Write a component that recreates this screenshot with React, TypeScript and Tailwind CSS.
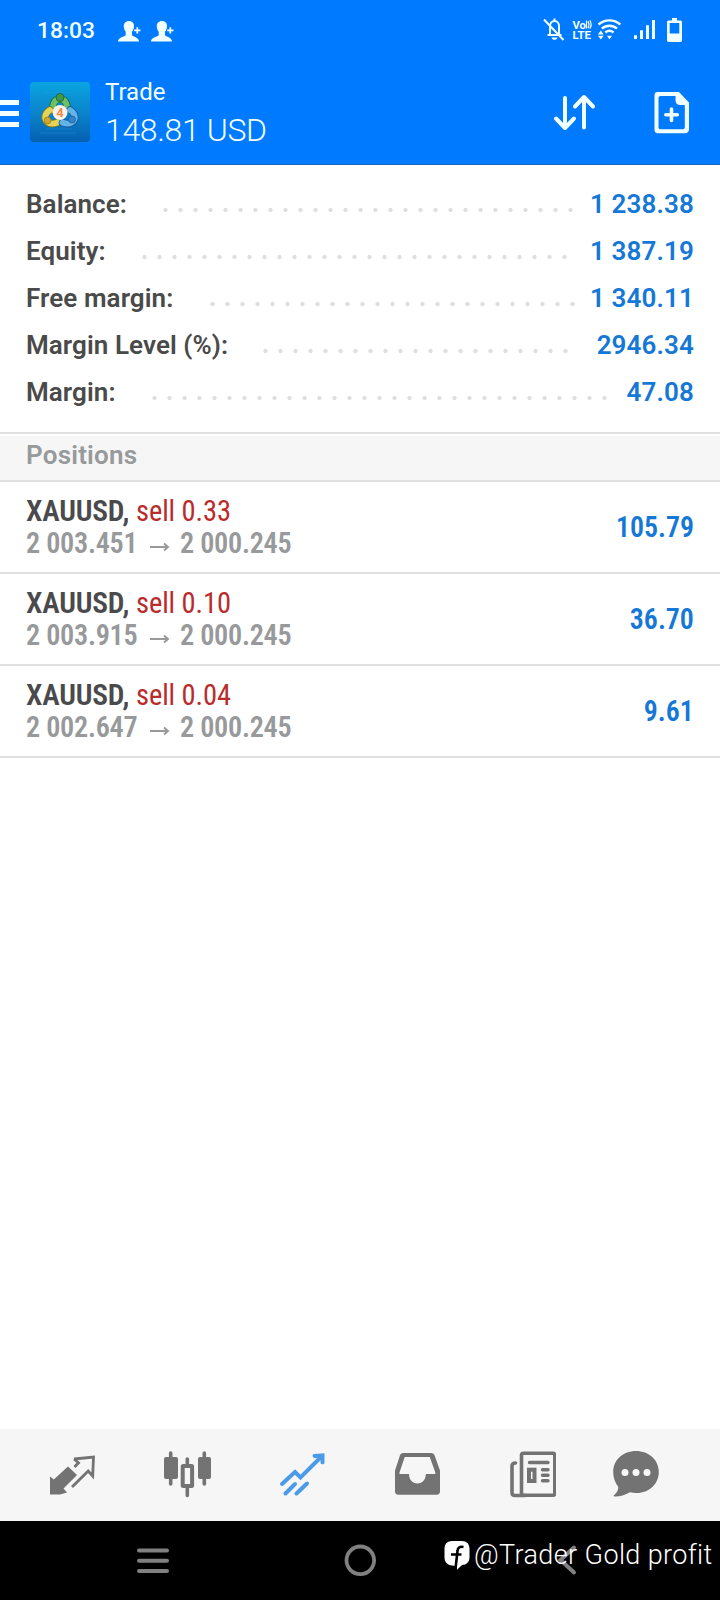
import type { ReactNode } from "react";

const summary = [
  { label: "Balance:", value: "1 238.38", labelClass: "w-[132px]", dotsClass: "w-[420px]" },
  { label: "Equity:", value: "1 387.19", labelClass: "w-[111px]", dotsClass: "w-[435px]" },
  { label: "Free margin:", value: "1 340.11", labelClass: "w-[179px]", dotsClass: "w-[375px]" },
  { label: "Margin Level (%):", value: "2946.34", labelClass: "w-[232px]", dotsClass: "w-[315px]" },
  { label: "Margin:", value: "47.08", labelClass: "w-[121px]", dotsClass: "w-[465px]" },
];

const positions = [
  { volume: "0.33", open: "2 003.451", current: "2 000.245", profit: "105.79" },
  { volume: "0.10", open: "2 003.915", current: "2 000.245", profit: "36.70" },
  { volume: "0.04", open: "2 002.647", current: "2 000.245", profit: "9.61" },
];

function PersonAdd() {
  return (
    <svg width="23" height="22" viewBox="0 0 23 22" fill="#f2ffff">
      <path d="M11 0c3.300 0 5.200 2.300 5 5.500-.1 2.200-.9 4-2 5.300v3.400c.9 1.500 7 2 7 6.300H0c0-4.300 6.800-4.800 7.700-6.300v-3.400C6.600 9.500 5.900 7.700 5.800 5.500 5.700 2.300 7.700 0 11 0Z" />
      <path d="M18.400 6.200h1.800v2.200h2.300v1.800h-2.300v2.300h-1.800v-2.300h-2.200V8.400h2.200Z" />
    </svg>
  );
}

function StatusBar() {
  return (
    <div className="flex h-[60px] items-center pl-[37px] text-[#f2ffff]">
      <span className="mt-[3px] w-[81px] text-[22.800px] font-medium">18:03</span>
      <div className="mt-[4px] flex gap-2.5">
        <PersonAdd />
        <PersonAdd />
      </div>
      <svg className="ml-[367px]" width="142" height="26" viewBox="541 17 142 26" fill="none" stroke="#f2ffff" strokeWidth="2">
        <path d="M547.500 35h14M550 34v-8c0-3 2-5 4.500-5s4.500 2 4.500 5v8M554.500 21v-2.500" />
        <path d="M544 19.500 563.500 40" />
        <path d="M551.500 37.500h6c-.5 1.500-1.500 2.300-3 2.300s-2.500-.8-3-2.300Z" fill="#f2ffff" stroke="none" />
        <text x="572.500" y="28.500" textLength="13.500" lengthAdjust="spacingAndGlyphs" fill="#f2ffff" stroke="none" className="font-[Roboto] text-[10.500px] font-bold">Vo</text>
        <path d="M586.500 20.500v8M588 21.300c1.100 2 1.100 4.800 0 6.800M589.800 20.300c1.600 2.600 1.600 5.900 0 8.300" strokeWidth="1.200" />
        <text x="572.500" y="39" textLength="18.500" lengthAdjust="spacingAndGlyphs" fill="#f2ffff" stroke="none" className="font-[Roboto] text-[11px] font-bold">LTE</text>
        <path d="M598.500 24.500c6.300-5.500 15.500-5.500 21.800 0M601.800 28.700c4.400-4 10.800-4 15.200 0M605.300 32.500c2.500-2.200 5.700-2.200 8.200 0" strokeWidth="2.400" />
        <path d="m600.800 30.600 2.900 4h-5.800ZM600.800 39.400l-2.900-3.600h5.800ZM609.500 39.400l-2.500-3.600h5Z" fill="#f2ffff" stroke="none" />
        <path d="M634 35.300h3V39h-3ZM640 30.300h3V39h-3ZM646 25.300h3V39h-3ZM652 20h3v19h-3Z" fill="#f2ffff" stroke="none" />
        <path d="M672 18h5v2.500h3.300c1 0 1.700.7 1.700 1.700v18c0 1-.7 1.700-1.700 1.700h-11.600c-1 0-1.700-.7-1.700-1.700v-18c0-1 .7-1.700 1.700-1.700h3.300Zm-2.300 5v10.500h9.600V23Z" fill="#f2ffff" fillRule="evenodd" stroke="none" />
      </svg>
    </div>
  );
}

function AppLogo() {
  return (
    <svg className="ml-[11px]" width="60" height="60" viewBox="0 0 60 60">
      <defs>
        <linearGradient id="tile" x1="0" y1="0" x2="0" y2="1">
          <stop offset="0" stopColor="#0aa5e0" />
          <stop offset="0.5" stopColor="#0b84cc" />
          <stop offset="1" stopColor="#0560b0" />
        </linearGradient>
      </defs>
      <rect width="60" height="60" rx="4" fill="url(#tile)" />
      <path d="M13 10.500h30M10 51h36M16 47h26" stroke="#2ea0dc" strokeWidth=".6" opacity=".6" />
      <g strokeLinecap="round" fill="none">
        <path d="M23 26c0-6 3-9 7-9s7 3 7 9" stroke="#1e6b3f" strokeWidth="7.500" />
        <path d="M23 26c0-6 3-9 7-9s7 3 7 9" stroke="#6cc06a" strokeWidth="5.800" />
        <path d="M20 28c-5 3-6 8-3.500 11s7 3 11 1.500" stroke="#7b7a2a" strokeWidth="7.500" />
        <path d="M20 28c-5 3-6 8-3.500 11s7 3 11 1.500" stroke="#e4d455" strokeWidth="5.800" />
        <path d="M40 28c5 3 6 8 3.500 11s-7 3-11 1.500" stroke="#175a99" strokeWidth="7.500" />
        <path d="M40 28c5 3 6 8 3.500 11s-7 3-11 1.500" stroke="#62b4e8" strokeWidth="5.800" />
      </g>
      <circle cx="30" cy="15.500" r="4" fill="#3f9a4a" stroke="#1e6b3f" />
      <circle cx="17.500" cy="38.500" r="3.500" fill="#d0a62e" stroke="#8b7a1a" strokeWidth=".7" />
      <circle cx="42" cy="37.500" r="3.500" fill="#3383cc" stroke="#175a99" strokeWidth=".7" />
      <circle cx="30" cy="30.500" r="7.500" fill="#fbf3ea" />
      <text x="30" y="35.300" textAnchor="middle" fill="#ef8a4b" className="font-[Roboto] text-[13px] font-bold">4</text>
    </svg>
  );
}

function TitleBar() {
  return (
    <div className="flex h-[104px] items-start pt-[22px] text-[#f2ffff]">
      <div className="mt-[18px] flex w-[19px] flex-col gap-[6px]">
        <div className="h-[5px] bg-[#f2ffff]" />
        <div className="h-[5px] bg-[#f2ffff]" />
        <div className="h-[5px] bg-[#f2ffff]" />
      </div>
      <AppLogo />
      <div className="-mt-1 ml-[15px] w-[447px]">
        <div className="text-[24px] leading-7">Trade</div>
        <div className="mt-[6px] text-[32px] leading-9 font-[350] tracking-[-0.350px]">148.81 USD</div>
      </div>
      <svg className="mt-[12px]" width="45" height="37" viewBox="552 94 45 37" fill="none" stroke="#f2ffff" strokeWidth="4" strokeLinecap="round" strokeLinejoin="round">
        <path d="M565 98v29.500M556 118.500l9 9.500 9-9.500M584 127.500V98M575 106.500l9-9.500 9 9.500" />
      </svg>
      <svg className="ml-[56px] mt-[9px]" width="38" height="44" viewBox="653 91 38 44" fill="#f2ffff">
        <path fillRule="evenodd" d="M657.500 92H679l10 10.500v27c0 2-1.500 3.700-3.700 3.700h-27.600c-2 0-3.200-1.500-3.200-3.500V95.200c0-2 1.200-3.200 3-3.200Zm3.300 4c-1.500 0-2.300.8-2.300 2.300v28.700c0 1.500.8 2.300 2.300 2.300h21.700c1.500 0 2.300-.8 2.300-2.300v-22h-4.500c-3 0-4.800-1.800-4.800-4.500V96Z" />
        <path d="M671.500 109v11.500M665.800 114.700h11.500" stroke="#f2ffff" strokeWidth="3.600" strokeLinecap="round" />
      </svg>
    </div>
  );
}

function TabIcon({ children }: { children: ReactNode }) {
  return (
    <svg width="48" height="48" viewBox="0 0 48 48" fill="#737373" className="shrink-0">
      {children}
    </svg>
  );
}

function TabBar() {
  return (
    <nav className="flex h-[92px] items-center gap-[67px] bg-[#f6f6f6] pl-12">
      <TabIcon>
        <path d="M2 6.500 5.800 9.500 20 -3.500 29 5 15.500 18.500 19 22.500 12 24.500H2Z" transform="translate(0 19)" />
        <path d="M26 8 45.500 6l-.8 19-4.500-5L24 36M26 8l4.500 3.800-4 4.200" fill="none" stroke="#737373" strokeWidth="2.800" />
      </TabIcon>
      <TabIcon>
        <rect x="1" y="6" width="14" height="22" rx="2" />
        <rect x="35" y="6" width="13" height="22" rx="2" />
        <path d="M7.700 2v31M41.300 2v31M24.300 8v7M24.300 36v8.500" stroke="#737373" strokeWidth="3.600" strokeLinecap="round" />
        <rect x="19.700" y="15" width="9.400" height="20" rx=".5" fill="none" stroke="#737373" strokeWidth="4" />
      </TabIcon>
      <TabIcon>
        <g fill="none" stroke="#4c9be8" strokeWidth="4" strokeLinecap="round">
          <path d="M4 33 17 21l5.500 5.500L44 5" strokeLinejoin="miter" />
          <path d="M7.500 42.500 17 33M18.500 42.500 29 32.500" />
        </g>
        <path d="M35.500 3 46.500 2.300V12c-.3 1.700-3.500 1.700-4 0V7h-6c-2-.3-2.500-3-1-4Z" fill="#4c9be8" />
      </TabIcon>
      <TabIcon>
        <path fillRule="evenodd" d="M10.500 2h27.500c1.800 0 2.800.7 3.500 2.200l5.500 15.300V40.500c0 2-1.200 3.200-3 3.200H5.200c-2 0-3.200-1.200-3.200-3.200v-21L7 4.200C7.700 2.700 8.700 2 10.500 2Zm1.200 4L6.500 21.500V23H16c0 5.500 3.500 9.500 8.500 9.500s8.300-4 8.300-9.500h9.500v-1.500L36.800 6Z" />
      </TabIcon>
      <TabIcon>
        <g fill="none" stroke="#737373" strokeWidth="3.600" strokeLinecap="round">
          <rect x="13.500" y="2.300" width="33.300" height="42" rx="2" />
          <path d="M7.500 12C5 12 4 13 4 15v26.500c0 2 1 3 3 3h10" />
          <path d="M21.500 11.500H40M34.500 18.700H40M34.500 24.200H40M34.500 29.800H40" strokeWidth="3.400" />
          <rect x="21" y="18.700" width="5.500" height="11.300" strokeWidth="4" />
        </g>
      </TabIcon>
      <div className="-ml-3 flex">
        <TabIcon>
          <path d="M25 0C38 0 47.800 9 47.800 21S38 42 26 42c-2.500 0-5-.3-7-.8-5 2.800-11 4.600-15.500 4.300-.8 0-1-.7-.5-1.200 2.500-2.300 4.500-5.300 4.300-8.300C4.300 32 2.200 27 2.200 21 2.200 9 12 0 25 0Z" />
          <circle cx="14" cy="21.500" r="3.500" fill="#f6f6f6" />
          <circle cx="25" cy="21.500" r="3.500" fill="#f6f6f6" />
          <circle cx="36" cy="21.500" r="3.500" fill="#f6f6f6" />
        </TabIcon>
      </div>
    </nav>
  );
}

function SystemNav() {
  return (
    <div className="relative flex h-[79px] items-center justify-center gap-[167px] bg-black pb-px">
      <svg width="40" height="40" viewBox="0 0 40 40" stroke="#808080" strokeWidth="4" strokeLinecap="round">
        <path d="M6 10.500h28M6 20.800h28M6 31h28" />
      </svg>
      <svg width="40" height="40" viewBox="0 0 40 40" fill="none" stroke="#808080" strokeWidth="3.800">
        <circle cx="20.300" cy="20.300" r="13.800" />
      </svg>
      <svg width="40" height="40" viewBox="0 0 40 40" fill="none" stroke="#808080" strokeWidth="4" strokeLinecap="round">
        <path d="M27 7.500 13.500 20 27 32.500" />
      </svg>
      <div className="absolute top-[16px] left-[444px] flex items-center whitespace-nowrap text-white">
        <svg width="26" height="30" viewBox="0 0 26 30">
          <path d="M8 1h10c4.500 0 7.500 3 7.500 7.500v9c0 4.500-3 7.300-7.500 7.500l-5 4.700V26L8 25.500C3.500 25 .5 22 .5 17.500v-9C.5 4 3.500 1 8 1Z" fill="#fff" />
          <path d="M19.500 7c-4-.8-5.800.8-6 4l-1.700 15M7 14.500h10.500" fill="none" stroke="#000" strokeWidth="2.600" />
        </svg>
        <span className="ml-[4px] text-[27px] leading-9 font-[350] tracking-[0.380px]">@Trader Gold profit</span>
      </div>
    </div>
  );
}

export default function App() {
  return (
    <div className="flex h-[1600px] w-[720px] flex-col overflow-hidden bg-white font-[Roboto,sans-serif]">
      <header className="border-b border-[#1a68b8] bg-[#007aff]">
        <StatusBar />
        <TitleBar />
      </header>

      <section className="h-[269px] border-b-2 border-[#e0e0e0] pt-[16px]">
        {summary.map((row) => (
          <div key={row.label} className="flex h-[47px] items-center px-[26px] text-[26px] leading-[47px] font-semibold">
            <span className={`shrink-0 whitespace-nowrap tracking-[0.080px] text-[#4a4a4a] ${row.labelClass}`}>{row.label}</span>
            <span className={`mt-[10px] h-[6px] shrink-0 bg-[radial-gradient(circle_at_center,#dfdfdf_1.7px,transparent_2.6px)] bg-[length:15px_6px] ${row.dotsClass}`} />
            <span className="ml-auto tracking-[0.120px] text-[#1578d6]">{row.value}</span>
          </div>
        ))}
      </section>

      <div className="mt-[2px] h-[46px] border-b-2 border-[#e0e0e0] bg-[#f6f6f6] px-[26px] text-[26px] leading-[39px] font-semibold tracking-[0.200px] text-[#97999b]">
        Positions
      </div>

      <section className="flex-1">
        {positions.map((p) => (
          <div key={p.volume} className="flex h-[92px] items-center justify-between border-b-2 border-[#e0e0e0] px-[26px] font-['Roboto_Condensed'] text-[30px] leading-8 font-semibold">
            <div>
              <div className="flex">
                <span className="w-[110px] origin-left scale-x-[0.980] tracking-[-0.200px] text-[#4a4a4c]">XAUUSD,</span>
                <span className="origin-left scale-x-[0.950] font-normal tracking-[-0.100px] text-[#b92c2c]">sell {p.volume}</span>
              </div>
              <div className="flex items-center text-[#97999b]">
                <span className="w-[123px] origin-left scale-x-[0.940] tracking-[-0.280px]">{p.open}</span>
                <svg className="mt-[7px]" width="22" height="10" viewBox="0 0 22 10" fill="none" stroke="#97999b" strokeWidth="2">
                  <path d="M1 5h18M15 1.500l4 3.500-4 3.500" />
                </svg>
                <span className="ml-[9px] origin-left scale-x-[0.940] tracking-[-0.280px]">{p.current}</span>
              </div>
            </div>
            <span className="origin-right scale-x-[0.930] text-[#1578d6]">{p.profit}</span>
          </div>
        ))}
      </section>

      <TabBar />
      <SystemNav />
    </div>
  );
}
